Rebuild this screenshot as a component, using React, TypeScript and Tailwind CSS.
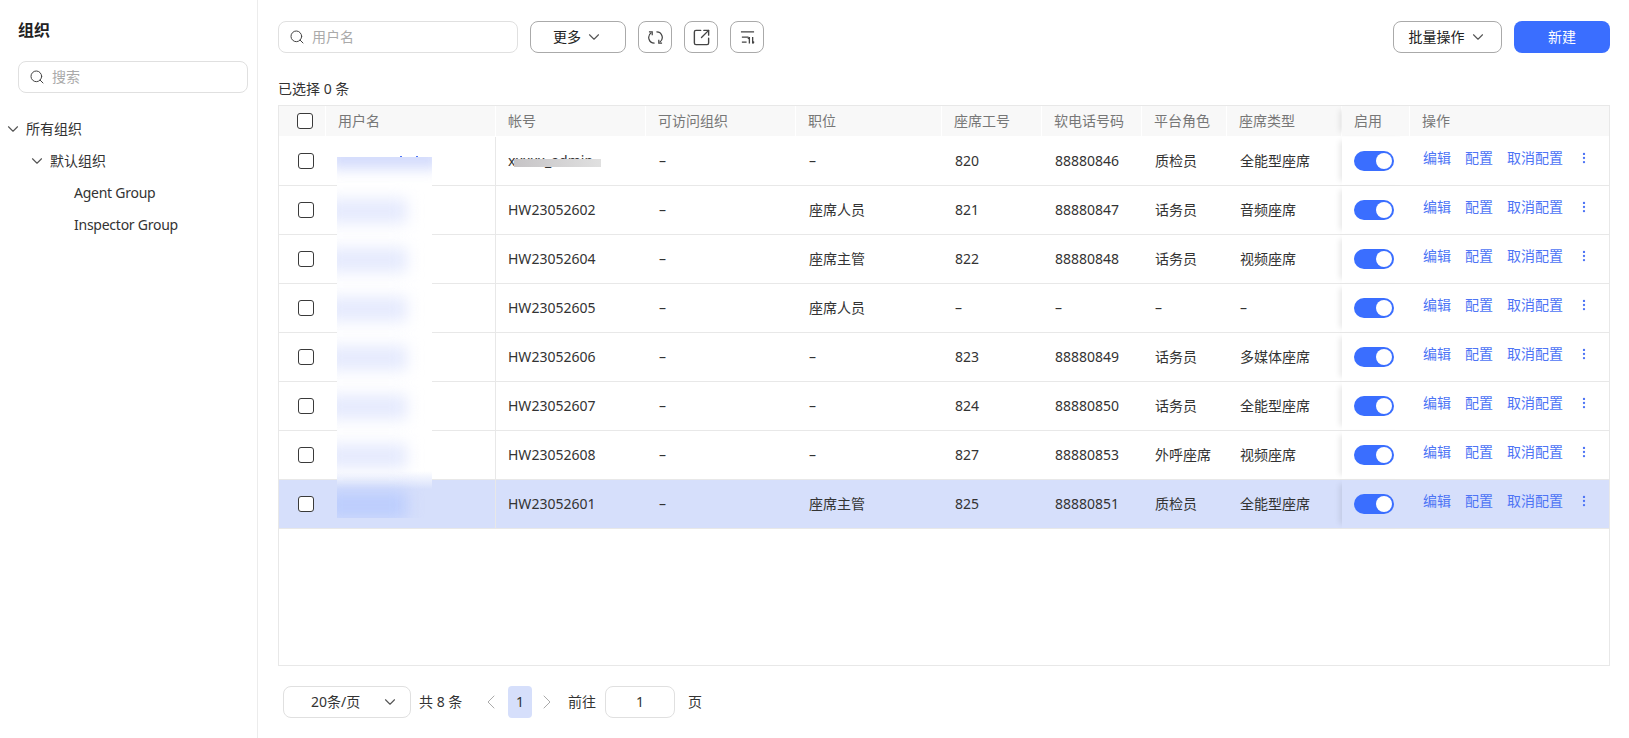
import { ChevronDown, ChevronLeft, ChevronRight, EllipsisVertical, Search, SquareArrowOutUpRight } from "lucide-react";

const COLS = "grid grid-cols-[47px_170px_150px_150px_146px_100px_100px_85px_115px_68px_1fr]";

const users = [
  { account: "", position: "–", no: "820", phone: "88880846", role: "质检员", type: "全能型座席" },
  { account: "HW23052602", position: "座席人员", no: "821", phone: "88880847", role: "话务员", type: "音频座席" },
  { account: "HW23052604", position: "座席主管", no: "822", phone: "88880848", role: "话务员", type: "视频座席" },
  { account: "HW23052605", position: "座席人员", no: "–", phone: "–", role: "–", type: "–" },
  { account: "HW23052606", position: "–", no: "823", phone: "88880849", role: "话务员", type: "多媒体座席" },
  { account: "HW23052607", position: "–", no: "824", phone: "88880850", role: "话务员", type: "全能型座席" },
  { account: "HW23052608", position: "–", no: "827", phone: "88880853", role: "外呼座席", type: "视频座席" },
  { account: "HW23052601", position: "座席主管", no: "825", phone: "88880851", role: "质检员", type: "全能型座席" },
];

const headers = ["用户名", "帐号", "可访问组织", "职位", "座席工号", "软电话号码", "平台角色", "座席类型"];

function Checkbox() {
  return <span className="block size-4 rounded-[3px] border-[1.5px] border-[#3a3a3a] bg-white" />;
}

function SearchBox({ placeholder, className }: { placeholder: string; className: string }) {
  return (
    <div className={`flex h-8 items-center gap-[7px] rounded-lg border border-[#e0e0e0] bg-white pl-[10px] ${className}`}>
      <Search className="size-4 text-[#444]" strokeWidth={1.5} />
      <span className="text-sm text-[#aaa]">{placeholder}</span>
    </div>
  );
}

function IconButton({ children }: { children: React.ReactNode }) {
  return (
    <button type="button" className="flex h-8 w-[34px] items-center justify-center rounded-lg border border-[#aaa] text-[#444]">
      {children}
    </button>
  );
}

function Row({ user, index }: { user: (typeof users)[number]; index: number }) {
  const selected = index === 7;
  return (
    <div className={`${COLS} h-[49px] items-stretch border-b border-[#e8e8e8] text-sm text-[#333] ${selected ? "bg-[#d6dffb]" : "bg-white"}`}>
      <div className="flex items-center justify-center pl-[6px]">
        <Checkbox />
      </div>
      <div className="border-r border-[#e8e8e8]" />
      <div className="relative flex items-center pl-3">
        {index === 0 ? (
          <>
            <span>xxxxx_admin</span>
            <span className="absolute top-[22px] left-[18px] h-2 w-[87px] bg-linear-to-r from-[#c6c4c6] to-[#e0e0e0]" />
          </>
        ) : (
          user.account
        )}
      </div>
      <div className="flex items-center pl-[13px]">–</div>
      <div className="flex items-center pl-[13px]">{user.position}</div>
      <div className="flex items-center pl-[13px]">{user.no}</div>
      <div className="flex items-center pl-[13px]">{user.phone}</div>
      <div className="flex items-center pl-[13px]">{user.role}</div>
      <div className="flex items-center pl-[13px]">{user.type}</div>
      <div className={`flex items-center pl-3 shadow-[-6px_0_6px_-4px_rgba(0,0,0,0.1)] ${selected ? "bg-[#d6dffb]" : "bg-white"}`}>
        <span className="flex h-5 w-10 items-center justify-end rounded-full bg-[#3a6eff] pr-[2px]">
          <span className="size-4 rounded-full bg-white" />
        </span>
      </div>
      <div className="flex items-center gap-[14px] pb-[6px] pl-[13px] text-[#4d74f5]">
        <span>编辑</span>
        <span>配置</span>
        <span>取消配置</span>
        <EllipsisVertical className="size-[14px]" strokeWidth={2} />
      </div>
    </div>
  );
}

export default function App() {
  return (
    <div className="flex h-screen bg-white font-['Noto_Sans','Noto_Sans_CJK_SC',sans-serif] text-sm text-[#333]">
      <aside className="w-[258px] shrink-0 border-r border-[#ececec] pt-[19px]">
        <h2 className="pl-[18px] text-base leading-[22px] font-bold text-[#222]">组织</h2>
        <SearchBox placeholder="搜索" className="mt-[20px] ml-[18px] w-[230px]" />
        <ul className="mt-5 leading-8">
          <li className="flex items-center gap-1 pl-1">
            <ChevronDown className="size-[18px] text-[#555]" strokeWidth={1.5} />
            所有组织
          </li>
          <li className="flex items-center gap-1 pl-7">
            <ChevronDown className="size-[18px] text-[#555]" strokeWidth={1.5} />
            默认组织
          </li>
          <li className="pl-[74px] tracking-[-0.25px]">Agent Group</li>
          <li className="pl-[74px] tracking-[-0.25px]">Inspector Group</li>
        </ul>
      </aside>

      <main className="min-w-0 flex-1 pt-[21px] pr-[19px] pl-5">
        <div className="flex items-center">
          <SearchBox placeholder="用户名" className="w-[240px]" />
          <button type="button" className="ml-3 flex h-8 w-24 items-center justify-center gap-1 rounded-lg border border-[#aaa] text-[#222]">
            更多
            <ChevronDown className="size-[18px] text-[#555]" strokeWidth={1.5} />
          </button>
          <div className="ml-3 flex gap-3">
            <IconButton>
              <svg viewBox="0 0 16 16" className="size-[15px]" fill="none" stroke="currentColor" strokeWidth="1.3">
                <path d="M3.5 3A6 6 0 0 0 7 14" />
                <path d="M1 2h3.5v3.5" />
                <path d="M12.5 13A6 6 0 0 0 9 2" />
                <path d="M15 14h-3.5v-3.5" />
              </svg>
            </IconButton>
            <IconButton>
              <SquareArrowOutUpRight className="size-[19px]" strokeWidth={1.75} />
            </IconButton>
            <IconButton>
              <svg viewBox="0 0 16 16" className="size-[15px]" fill="none" stroke="currentColor" strokeWidth="1.4">
                <path d="M1 2h14M2 7.5h7M2 13h5" />
                <path d="M10 14.5v-7M8.5 9.5l1.5-2M13.5 7.5v7M13.5 14.5l1.5-2" />
              </svg>
            </IconButton>
          </div>
          <button type="button" className="ml-auto flex h-8 w-[109px] items-center justify-center gap-1 rounded-lg border border-[#aaa] text-[#222]">
            批量操作
            <ChevronDown className="size-[18px] text-[#555]" strokeWidth={1.5} />
          </button>
          <button type="button" className="ml-3 h-8 w-24 rounded-lg bg-[#3a6eff] text-white">
            新建
          </button>
        </div>

        <p className="mt-[26px] leading-5">已选择 0 条</p>

        <div className="relative mt-[6px] h-[561px] border border-[#e8e8e8]">
          <div className={`${COLS} h-[31px] items-stretch border-b border-white bg-[#f8f8f8] text-[#777]`}>
            <div className="flex items-center justify-center border-r border-white pl-[6px]">
              <Checkbox />
            </div>
            {headers.map((h) => (
              <div key={h} className="flex items-center border-r border-white pl-3">
                {h}
              </div>
            ))}
            <div className="flex items-center border-r border-white pl-3 shadow-[-6px_0_6px_-4px_rgba(0,0,0,0.1)]">启用</div>
            <div className="flex items-center pl-3">操作</div>
          </div>
          {users.map((user, i) => (
            <Row key={user.phone + i} user={user} index={i} />
          ))}

          {/* masked user names */}
          <span className="absolute top-[50px] left-[121px] h-px w-[2px] bg-[#4d74f5]" />
          <span className="absolute top-[50px] left-[137px] h-px w-[2px] bg-[#4d74f5]" />
          <div className="absolute top-[51px] left-[58px] h-[361px] w-[95px] overflow-hidden bg-[linear-gradient(to_bottom,#fff_0,#fff_87%,#d6dffb_92%,#d6dffb_100%)]">
            <div className="h-[29px]">
              <div className="h-6 w-[calc(100%+16px)] -translate-x-2 -translate-y-3 bg-[#d4dcfc] blur-[7px]" />
            </div>
            {[0, 1, 2, 3, 4, 5].map((i) => (
              <div key={i} className="flex h-[49px] items-center">
                <div className="-ml-3 h-6 w-[82px] bg-[#e4e9fd] blur-[8px]" />
              </div>
            ))}
            <div className="pt-[11px]">
              <div className="-ml-3 h-7 w-[82px] bg-[#bccdfd] blur-[8px]" />
            </div>
          </div>
        </div>

        <div className="mt-[20px] flex h-8 items-center pl-[5px]">
          <div className="relative flex h-8 w-[128px] items-center rounded-lg border border-[#e0e0e0] pl-[27px]">
            20条/页
            <ChevronDown className="absolute right-[11px] size-[18px] text-[#555]" strokeWidth={1.5} />
          </div>
          <span className="ml-2 w-[43px] whitespace-nowrap">共 8 条</span>
          <ChevronLeft className="ml-[17px] size-6 text-[#aaa]" strokeWidth={1} />
          <span className="ml-[5px] flex h-8 w-6 items-center justify-center rounded-[4px] bg-[#d6dffb] text-[#333]">1</span>
          <ChevronRight className="ml-[3px] size-6 text-[#aaa]" strokeWidth={1} />
          <span className="ml-[9px]">前往</span>
          <span className="ml-[9px] flex h-8 w-[70px] items-center justify-center rounded-lg border border-[#e0e0e0]">1</span>
          <span className="ml-[13px]">页</span>
        </div>
      </main>
    </div>
  );
}
